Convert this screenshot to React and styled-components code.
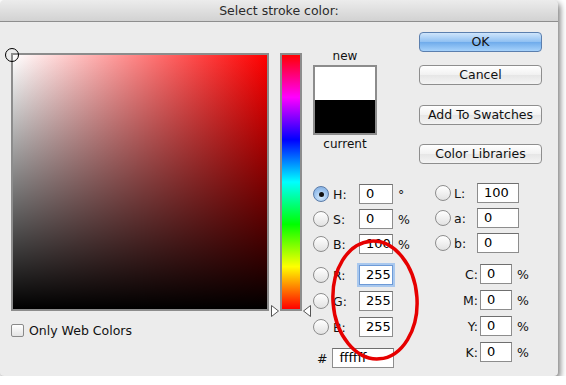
import React from "react";
import styled, { createGlobalStyle } from "styled-components";

const GlobalStyle = createGlobalStyle`
  html, body {
    margin: 0;
    padding: 0;
    background: #ffffff;
  }
  body {
    font-family: "DejaVu Sans", "Liberation Sans", sans-serif;
    font-size: 12px;
    color: #111;
  }
`;

const hsb = [
  { key: "H", value: "0", unit: "°", checked: true },
  { key: "S", value: "0", unit: "%" },
  { key: "B", value: "100", unit: "%" },
];

const rgb = [
  { key: "R", value: "255", focus: true },
  { key: "G", value: "255" },
  { key: "B", value: "255" },
];

const lab = [
  { key: "L", value: "100" },
  { key: "a", value: "0" },
  { key: "b", value: "0" },
];

const cmyk = ["C", "M", "Y", "K"];

const App = () => {
  return (
    <>
      <GlobalStyle />
      <Dialog>
        <TitleBar>Select stroke color:</TitleBar>
        <Body>
          <LeftColumn>
            <FieldWrap>
              <ColorField />
              <Marker />
            </FieldWrap>
            <CheckRow>
              <CheckBox />
              <span>Only Web Colors</span>
            </CheckRow>
          </LeftColumn>

          <HueColumn>
            <HueBar />
            <Arrow side="left">
              <svg width="8" height="12" viewBox="0 0 8 12">
                <path d="M0.5 0.5 L7.5 6 L0.5 11.5 Z" fill="#fff" stroke="#555" />
              </svg>
            </Arrow>
            <Arrow side="right">
              <svg width="8" height="12" viewBox="0 0 8 12">
                <path d="M7.5 0.5 L0.5 6 L7.5 11.5 Z" fill="#fff" stroke="#555" />
              </svg>
            </Arrow>
          </HueColumn>

          <MiddleColumn>
            <SwatchBlock>
              <SwatchLabel>new</SwatchLabel>
              <Swatch>
                <SwatchHalf color="#ffffff" />
                <SwatchHalf color="#000000" />
              </Swatch>
              <SwatchLabel>current</SwatchLabel>
            </SwatchBlock>

            <FieldGroup gap={5}>
              {hsb.map((f) => (
                <FieldRow key={f.key}>
                  <Radio checked={f.checked} />
                  <Label>{f.key}:</Label>
                  <Input width={34}>{f.value}</Input>
                  <Unit>{f.unit}</Unit>
                </FieldRow>
              ))}
            </FieldGroup>

            <FieldGroup gap={6} top={11}>
              {rgb.map((f) => (
                <FieldRow key={f.key}>
                  <Radio />
                  <Label>{f.key}:</Label>
                  <Input width={34} focus={f.focus}>
                    {f.value}
                  </Input>
                </FieldRow>
              ))}
            </FieldGroup>

            <HexRow>
              <span>#</span>
              <Input width={62}>ffffff</Input>
            </HexRow>
          </MiddleColumn>

          <RightColumn>
            <Button primary>OK</Button>
            <Button top={13}>Cancel</Button>
            <Button top={20}>Add To Swatches</Button>
            <Button top={19}>Color Libraries</Button>

            <FieldGroup gap={5} top={19} left={16}>
              {lab.map((f) => (
                <FieldRow key={f.key}>
                  <Radio />
                  <LabLabel>{f.key}:</LabLabel>
                  <Input width={42}>{f.value}</Input>
                </FieldRow>
              ))}
            </FieldGroup>

            <FieldGroup gap={6} top={11}>
              {cmyk.map((k) => (
                <FieldRow key={k}>
                  <CmykLabel>{k}:</CmykLabel>
                  <Input width={32}>0</Input>
                  <Unit>%</Unit>
                </FieldRow>
              ))}
            </FieldGroup>
          </RightColumn>
        </Body>

        <Ellipse>
          <svg width="100" height="130" viewBox="0 0 100 130">
            <ellipse
              cx="50"
              cy="65"
              rx="42"
              ry="59"
              fill="none"
              stroke="#e60000"
              strokeWidth="3.5"
              transform="rotate(-4 50 65)"
            />
          </svg>
        </Ellipse>
      </Dialog>
    </>
  );
};

export default App;

const Dialog = styled.div`
  position: relative;
  width: 558px;
  height: 376px;
  background: #ececec;
  border-radius: 5px 5px 4px 4px;
  box-shadow: 2px 3px 6px rgba(0, 0, 0, 0.55);
  overflow: hidden;
  box-sizing: border-box;
`;

const TitleBar = styled.div`
  height: 22px;
  line-height: 22px;
  text-align: center;
  font-size: 12.5px;
  color: #2a2a2a;
  background: linear-gradient(#ececec, #d2d2d2);
  border-bottom: 1px solid #8e8e8e;
  box-sizing: border-box;
`;

const Body = styled.div`
  display: flex;
  padding-left: 11px;
`;

const LeftColumn = styled.div`
  display: flex;
  flex-direction: column;
  padding-top: 31px;
`;

const FieldWrap = styled.div`
  position: relative;
`;

const ColorField = styled.div`
  width: 254px;
  height: 254px;
  border: 2px solid #8c8c8c;
  background: linear-gradient(to bottom, rgba(0, 0, 0, 0), #000),
    linear-gradient(to right, #fff, #ff0000);
`;

const Marker = styled.div`
  position: absolute;
  left: -6px;
  top: -5px;
  width: 12px;
  height: 12px;
  border: 1.5px solid #000;
  border-radius: 50%;
`;

const CheckRow = styled.div`
  display: flex;
  align-items: center;
  gap: 5px;
  margin-top: 12px;
  font-size: 12.5px;
`;

const CheckBox = styled.div`
  width: 11px;
  height: 11px;
  border: 1px solid #8a8a8a;
  border-radius: 2px;
  background: linear-gradient(#ffffff, #e4e4e4);
`;

const HueColumn = styled.div`
  position: relative;
  padding-top: 31px;
  margin-left: 11px;
`;

const HueBar = styled.div`
  width: 18px;
  height: 254px;
  border: 2px solid #8c8c8c;
  background: linear-gradient(
    to bottom,
    #ff0000 0%,
    #ff00ff 16.66%,
    #0000ff 33.33%,
    #00ffff 50%,
    #00ff00 66.66%,
    #ffff00 83.33%,
    #ff0000 100%
  );
`;

const Arrow = styled.div`
  position: absolute;
  top: 283px;
  ${(p) => (p.side === "left" ? "left: -9px;" : "right: -9px;")}
  line-height: 0;
`;

const MiddleColumn = styled.div`
  display: flex;
  flex-direction: column;
  margin-left: 11px;
  width: 106px;
`;

const SwatchBlock = styled.div`
  display: flex;
  flex-direction: column;
  align-items: center;
  width: 64px;
  padding-top: 25px;
  margin-bottom: 31px;
`;

const SwatchLabel = styled.div`
  font-size: 12px;
  line-height: 16px;
  margin: 1px 0;
`;

const Swatch = styled.div`
  display: flex;
  flex-direction: column;
  width: 60px;
  height: 66px;
  border: 2px solid #8c8c8c;
`;

const SwatchHalf = styled.div`
  flex: 1;
  background: ${(p) => p.color};
`;

const FieldGroup = styled.div`
  display: flex;
  flex-direction: column;
  gap: ${(p) => p.gap}px;
  margin-top: ${(p) => p.top || 0}px;
  padding-left: ${(p) => p.left || 0}px;
`;

const FieldRow = styled.div`
  display: flex;
  align-items: center;
  height: 20px;
  font-size: 12.5px;
`;

const Radio = styled.div`
  position: relative;
  width: 16px;
  height: 16px;
  box-sizing: border-box;
  border-radius: 50%;
  border: 1px solid ${(p) => (p.checked ? "#5a7ba8" : "#8d8d8d")};
  background: ${(p) =>
    p.checked
      ? "radial-gradient(circle at 50% 70%, #d6ecff, #8fb9e8 70%)"
      : "linear-gradient(#ffffff, #e2e2e2)"};
  &::after {
    content: "";
    display: ${(p) => (p.checked ? "block" : "none")};
    position: absolute;
    left: 4.5px;
    top: 4.5px;
    width: 5px;
    height: 5px;
    border-radius: 50%;
    background: #111;
  }
`;

const Label = styled.span`
  width: 26px;
  padding-left: 4px;
`;

const LabLabel = styled.span`
  width: 23px;
  padding-left: 3px;
`;

const CmykLabel = styled.span`
  width: 59px;
  text-align: right;
  padding-right: 2px;
`;

const Input = styled.div`
  width: ${(p) => p.width}px;
  height: 20px;
  box-sizing: border-box;
  background: #fff;
  border: 1px solid #8d8d8d;
  border-top-color: #6f6f6f;
  padding-left: 6px;
  line-height: 18px;
  font-size: 13px;
  color: #000;
  ${(p) =>
    p.focus &&
    "border-color: #6d9ad6; box-shadow: 0 0 0 2px #a9c8ee;"}
`;

const Unit = styled.span`
  margin-left: 5px;
  font-size: 12.5px;
`;

const HexRow = styled.div`
  display: flex;
  align-items: center;
  gap: 5px;
  height: 20px;
  margin-top: 11px;
  padding-left: 4px;
  font-size: 12.5px;
`;

const RightColumn = styled.div`
  display: flex;
  flex-direction: column;
  padding-top: 10px;
  width: 123px;
`;

const Button = styled.div`
  height: 20px;
  box-sizing: border-box;
  margin-top: ${(p) => p.top || 0}px;
  border-radius: 4px;
  border: 1px solid ${(p) => (p.primary ? "#5b7fae" : "#8e8e8e")};
  background: ${(p) =>
    p.primary
      ? "linear-gradient(#cfe5fb, #8fc0f2 50%, #6fabeb 51%, #a6d2fb)"
      : "linear-gradient(#ffffff, #f1f1f1 50%, #e6e6e6 51%, #f4f4f4)"};
  text-align: center;
  line-height: 18px;
  font-size: 12.5px;
  color: #111;
`;

const Ellipse = styled.div`
  position: absolute;
  left: 325px;
  top: 235px;
  line-height: 0;
  pointer-events: none;
`;
